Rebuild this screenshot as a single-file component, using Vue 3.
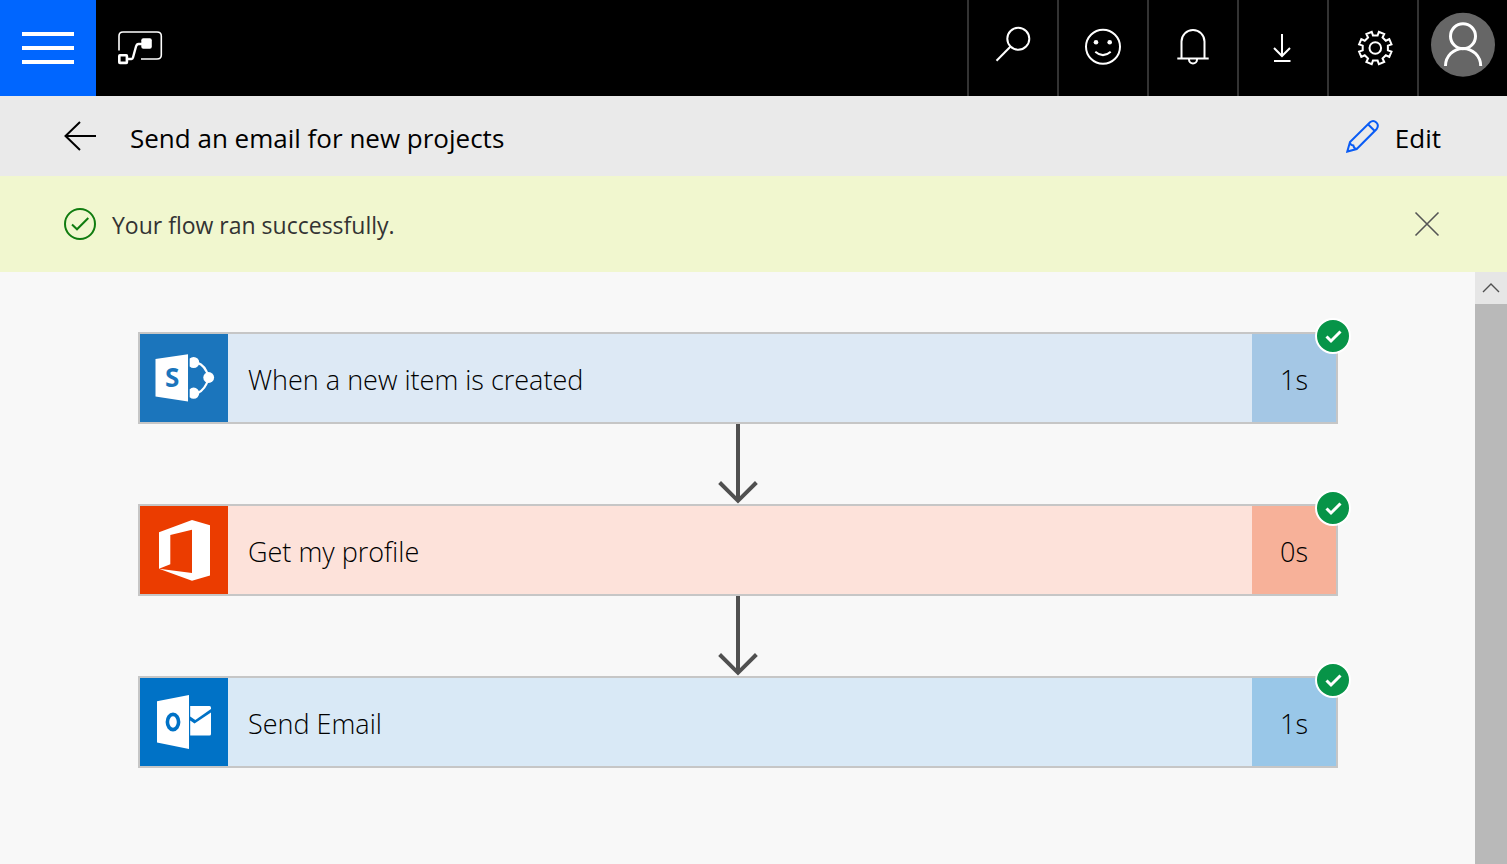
<script setup>
import { ref } from 'vue'

const showBanner = ref(true)

const steps = [
  { id: 'sharepoint', title: 'When a new item is created', duration: '1s' },
  { id: 'office', title: 'Get my profile', duration: '0s' },
  { id: 'outlook', title: 'Send Email', duration: '1s' },
]

// Outline of an eight-toothed gear around a centre point
function gearPath(cx, cy, inner, outer) {
  const point = (radius, degrees) => {
    const a = (degrees * Math.PI) / 180
    return `${(cx + radius * Math.sin(a)).toFixed(2)} ${(cy - radius * Math.cos(a)).toFixed(2)}`
  }
  const points = []
  for (let c = 22.5; c < 360; c += 45) {
    points.push(point(inner, c - 12), point(outer, c - 10), point(outer, c + 10), point(inner, c + 12))
  }
  return `M${points.join('L')}Z`
}

const gear = gearPath(46.3, 48, 12.8, 16.6)
</script>

<template>
  <div class="app">
    <header class="topbar">
      <button class="menu" type="button" aria-label="Menu">
        <span class="bar"></span>
        <span class="bar"></span>
        <span class="bar"></span>
      </button>
      <a class="logo" href="#" aria-label="Home">
        <svg width="48" height="40" viewBox="116 28 48 40" fill="none" stroke="#fff">
          <path d="M119 50.500V36Q119 32 123 32H157Q161.300 32 161.300 36V55Q161.300 59 157 59H141" stroke-width="1.600" />
          <rect x="119.300" y="55.300" width="7.600" height="7.600" rx="0.600" stroke-width="2.600" />
          <path d="M128 59H131.500Q132.600 59 133 57.500L136 46.500Q136.800 44 138.500 44H142" stroke-width="2.400" />
          <rect x="141.300" y="38.300" width="10.500" height="10.500" rx="2" fill="#fff" stroke="none" />
        </svg>
      </a>
      <nav class="tools" aria-label="Tools">
        <button class="tool" type="button" aria-label="Search">
          <svg viewBox="0 0 88 96"><circle cx="49.300" cy="38.700" r="11" /><path d="M41.300 46.700L27.500 60.700" /></svg>
        </button>
        <button class="tool" type="button" aria-label="Feedback">
          <svg viewBox="0 0 88 96">
            <circle cx="44" cy="46.700" r="17" />
            <circle class="solid" cx="37" cy="42.200" r="2.300" />
            <circle class="solid" cx="50.700" cy="42.200" r="2.300" />
            <path d="M36.300 51.700Q44 58.500 51.700 51.700" />
          </svg>
        </button>
        <button class="tool" type="button" aria-label="Notifications">
          <svg viewBox="0 0 88 96">
            <path d="M32.500 58V41.500A11.500 11.500 0 0 1 55.500 41.500V58M28.300 58.500H59.700M40 59.500A4 4 0 0 0 48 59.500" />
          </svg>
        </button>
        <button class="tool" type="button" aria-label="Downloads">
          <svg viewBox="0 0 88 96"><path d="M43 34V55.500M35 48L43 56L51 48M35 61H51.500" /></svg>
        </button>
        <button class="tool" type="button" aria-label="Settings">
          <svg viewBox="0 0 88 96"><path :d="gear" /><circle cx="46.300" cy="48" r="5.800" /></svg>
        </button>
        <button class="tool" type="button" aria-label="Account">
          <svg viewBox="0 0 88 96">
            <circle class="avatar" cx="44" cy="44.700" r="32" />
            <g class="person">
              <circle cx="44" cy="36.200" r="12.500" />
              <path d="M26.500 66A17.600 17.600 0 0 1 61.700 66" />
            </g>
          </svg>
        </button>
      </nav>
    </header>

    <div class="titlebar">
      <button class="plain" type="button" aria-label="Back">
        <svg width="34" height="32" viewBox="63 120 34 32" fill="none" stroke="#000" stroke-width="2">
          <path d="M96 136H66M80 122L65.500 136L80 150" />
        </svg>
      </button>
      <h1 class="title">Send an email for new projects</h1>
      <button class="plain edit" type="button">
        <svg width="34" height="34" viewBox="1346 119 34 34" fill="none" stroke="#0a5cf5" stroke-width="2">
          <path d="M1347.300 151.500L1350 142L1370 122.200Q1373.300 119.600 1376.300 122.400Q1379.200 125.500 1376.700 129L1356.700 149Z" />
          <path d="M1367.700 124L1375 131.200M1350 142.500Q1350.300 145.200 1353.300 145.500Q1354 148.600 1356.700 149" />
        </svg>
        <span>Edit</span>
      </button>
    </div>

    <div v-if="showBanner" class="banner" role="status">
      <svg width="32" height="32" viewBox="0 0 32 32" fill="none" stroke="#107c10" stroke-width="2">
        <circle cx="16" cy="16" r="15" />
        <path d="M8 16.500L13 21.300L24.300 10" />
      </svg>
      <p class="message">Your flow ran successfully.</p>
      <button class="plain close" type="button" aria-label="Dismiss" @click="showBanner = false">
        <svg width="28" height="28" viewBox="0 0 28 28" fill="none" stroke="#555" stroke-width="1.600">
          <path d="M2.500 2.500L25.500 25.500M25.500 2.500L2.500 25.500" />
        </svg>
      </button>
    </div>

    <div class="workspace">
      <main class="flow">
        <template v-for="(step, index) in steps" :key="step.id">
          <svg v-if="index > 0" class="connector" width="40" height="80" viewBox="0 0 40 80" fill="none" stroke="#505050" stroke-width="4">
            <path d="M20 0V76M1.600 58.500L20 76.800L38.400 58.500" />
          </svg>
          <article class="step" :class="step.id">
            <div class="icon">
              <svg v-if="step.id === 'sharepoint'" viewBox="0 0 88 88">
                <path d="M15.500 25L48 20.300V67.500L15.500 62.500Z" fill="#fff" />
                <text x="25" y="53" class="letter">S</text>
                <path d="M57 28.600Q65.500 31 68.700 43.500Q65.500 56 57 59.500" fill="none" stroke="#fff" stroke-width="2.200" />
                <path d="M49.700 24.500A5.600 5.600 0 1 1 49.700 32.500Z" fill="#fff" />
                <circle cx="68.700" cy="43.500" r="5.400" fill="#fff" />
                <path d="M49.700 55.200A5.600 5.600 0 1 1 49.700 63.200Z" fill="#fff" />
              </svg>
              <svg v-else-if="step.id === 'office'" viewBox="0 0 88 88">
                <path d="M19 26.300L52 14L70 19.300V69.500L52 74.700L19 62.700L30.300 58.200V29L52 23.700V67L19 62.700Z" fill="#fff" fill-rule="evenodd" />
              </svg>
              <svg v-else viewBox="0 0 88 88">
                <path d="M17 23.300L49 17V71L17 64.500Z" fill="#fff" />
                <ellipse cx="33" cy="44" rx="5.600" ry="7.600" fill="none" stroke="#0072c6" stroke-width="3.600" />
                <path d="M50.200 28H69.500Q71 28 71 29.500V31L55.300 42L50.200 38.500Z" fill="#fff" />
                <path d="M50.200 42.500L54.500 45.500L71 34.500V56Q71 57.500 69.500 57.500H50.200Z" fill="#fff" />
              </svg>
            </div>
            <h2 class="name">{{ step.title }}</h2>
            <div class="duration">{{ step.duration }}</div>
            <span class="badge" role="img" aria-label="Succeeded">
              <svg width="32" height="32" viewBox="0 0 32 32" fill="none" stroke="#fff" stroke-width="3">
                <path d="M9.500 16.500L14 21L23.500 11.500" />
              </svg>
            </span>
          </article>
        </template>
      </main>
      <div class="scrollbar">
        <button class="scroll-up" type="button" aria-label="Scroll up">
          <svg width="32" height="32" viewBox="0 0 32 32" fill="none" stroke="#505050" stroke-width="1.400">
            <path d="M8 20L16 12L24 20" />
          </svg>
        </button>
        <div class="thumb"></div>
      </div>
    </div>
  </div>
</template>

<style>
body {
  margin: 0;
}
</style>

<style scoped>
.app {
  display: flex;
  flex-direction: column;
  min-height: 100vh;
  background: #f8f8f8;
  color: #000;
  font-family: "Segoe UI", "Open Sans", "Noto Sans", sans-serif;
}

svg {
  display: block;
  flex: none;
}

button {
  margin: 0;
  padding: 0;
  border: 0;
  background: none;
  color: inherit;
  font: inherit;
  cursor: pointer;
}

.topbar {
  display: flex;
  height: 96px;
  background: #000;
}

.menu {
  display: flex;
  flex-direction: column;
  justify-content: center;
  align-items: center;
  gap: 10px;
  width: 96px;
  background: #0066ff;
}

.bar {
  width: 52px;
  height: 4px;
  background: #fff;
}

.logo {
  display: flex;
  align-items: center;
  padding-left: 20px;
}

.tools {
  display: flex;
  margin-left: auto;
}

.tool {
  width: 90px;
  border-left: 2px solid #333;
}

.tool svg {
  width: 88px;
  height: 96px;
  fill: none;
  stroke: #fff;
  stroke-width: 2;
}

.tool .solid {
  fill: #fff;
  stroke: none;
}

.tool .avatar {
  fill: #666;
  stroke: none;
}

.tool .person {
  stroke-width: 3;
}

.titlebar {
  display: flex;
  align-items: center;
  height: 80px;
  padding: 0 66px 0 63px;
  background: #eaeaea;
  font-size: 26px;
}

.title {
  margin: 4px 0 0 33px;
  font-size: 26px;
  font-weight: 400;
}

.edit {
  display: flex;
  align-items: center;
  gap: 15px;
  margin-left: auto;
}

.edit span {
  padding-top: 4px;
}

.banner {
  display: flex;
  align-items: center;
  height: 96px;
  padding: 0 66px 0 64px;
  background: #f1f7cf;
}

.message {
  margin: 2px 0 0 16px;
  color: #333;
  font-size: 23px;
}

.close {
  margin-left: auto;
}

.workspace {
  display: flex;
  flex: 1;
}

.flow {
  display: flex;
  flex: 1;
  flex-direction: column;
  align-items: center;
  padding: 60px 137px 60px 138px;
}

.step {
  position: relative;
  display: flex;
  align-items: center;
  align-self: stretch;
  height: 88px;
  border: 2px solid #c6c6c6;
}

.icon {
  width: 88px;
  height: 88px;
}

.letter {
  fill: #1b75bc;
  font-size: 26px;
  font-weight: 700;
}

.name {
  flex: 1;
  margin: 2px 0 0 20px;
  font-size: 27px;
  font-weight: 300;
}

.duration {
  display: flex;
  align-items: center;
  justify-content: center;
  box-sizing: border-box;
  width: 84px;
  height: 88px;
  padding-top: 2px;
  font-size: 27px;
  font-weight: 300;
}

.sharepoint {
  background: #dde9f5;
}

.sharepoint .icon {
  background: #1b75bc;
}

.sharepoint .duration {
  background: #a4c7e5;
}

.office {
  background: #fde2da;
}

.office .icon {
  background: #eb3c00;
}

.office .duration {
  background: #f7b199;
}

.outlook {
  background: #d9e9f6;
}

.outlook .icon {
  background: #0072c6;
}

.outlook .duration {
  background: #99c7e8;
}

.badge {
  position: absolute;
  top: -16px;
  right: -15px;
  border: 2px solid #fff;
  border-radius: 50%;
  background: #079448;
}

.scrollbar {
  display: flex;
  flex-direction: column;
  width: 32px;
}

.scroll-up {
  height: 32px;
  background: #e6e6e6;
}

.thumb {
  flex: 1;
  background: #b9b9b9;
}
</style>
